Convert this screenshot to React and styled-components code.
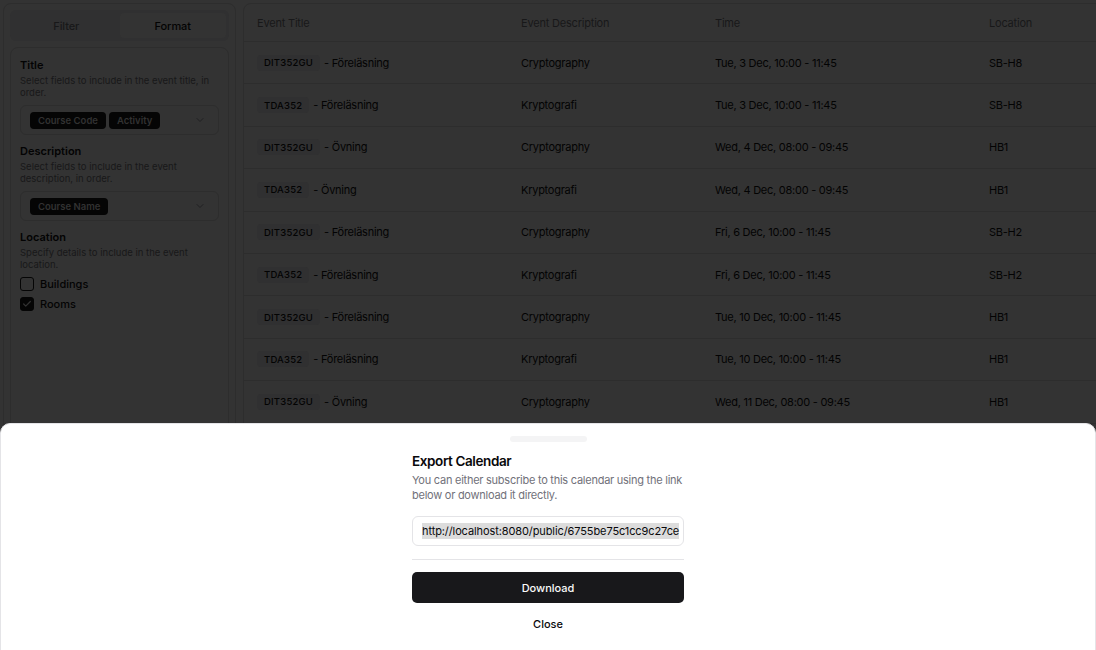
import React from "react";
import styled, { createGlobalStyle } from "styled-components";

/* Page colours as seen through the drawer's 80% black backdrop */
const dim = {
  bg: "#333333",
  border: "#2d2d2d",
  fg: "#030303",
  muted: "#181819",
  mutedBg: "#303031",
  chip: "#050505",
  chipText: "#323232",
  icon: "#202022",
};

const Global = createGlobalStyle`
  html, body { margin: 0; padding: 0; background: ${dim.bg}; }
  body { font-family: Inter, "Noto Sans", sans-serif; color: ${dim.fg}; }
  * { box-sizing: border-box; }
`;

const Screen = styled.div`
  position: relative;
  width: 1096px;
  height: 650px;
  overflow: hidden;
  background: ${dim.bg};
`;

const Page = styled.div`
  display: flex;
  gap: 7px;
  padding: 3px;
  width: 1200px;
  height: 650px;
`;

const Sidebar = styled.aside`
  width: 233px;
  flex: none;
  border: 1px solid ${dim.border};
  border-radius: 8px;
  padding: 6px;
  display: flex;
  flex-direction: column;
  gap: 6px;
`;

const TabList = styled.div`
  display: grid;
  grid-template-columns: 1fr 1fr;
  background: ${dim.mutedBg};
  border-radius: 6px;
  padding: 3px;
  height: 31px;
`;

const Tab = styled.div`
  display: flex;
  align-items: center;
  justify-content: center;
  font-size: 11px;
  letter-spacing: -0.1px;
  font-weight: 500;
  border-radius: 4px;
  color: ${(p) => (p.$active ? dim.fg : dim.muted)};
  background: ${(p) => (p.$active ? dim.bg : "transparent")};
`;

const Panel = styled.div`
  border: 1px solid ${dim.border};
  border-radius: 8px;
  padding: 10px 9px;
  flex: 1;
  display: flex;
  flex-direction: column;
  gap: 9px;
`;

const Section = styled.div`
  display: flex;
  flex-direction: column;
`;

const Label = styled.div`
  font-size: 11px;
  font-weight: 600;
  line-height: 14px;
`;

const Hint = styled.div`
  font-size: 9.5px;
  line-height: 11.5px;
  color: ${dim.muted};
  margin-top: 3px;
`;

const Select = styled.div`
  margin-top: 7px;
  height: 30px;
  border: 1px solid ${dim.border};
  border-radius: 6px;
  display: flex;
  align-items: center;
  padding: 0 9px;
  gap: 3px;
`;

const Chip = styled.span`
  background: ${dim.chip};
  color: ${dim.chipText};
  font-size: 9.5px;
  font-weight: 600;
  border-radius: 4px;
  padding: 0 8px;
  height: 17px;
  display: inline-flex;
  align-items: center;
`;

const Chevron = styled.svg`
  margin-left: auto;
  margin-right: 3px;
  width: 12px;
  height: 12px;
  color: ${dim.icon};
`;

const CheckRow = styled.label`
  display: flex;
  align-items: center;
  gap: 6px;
  font-size: 11px;
  font-weight: 500;
  height: 20px;
  margin-top: ${(p) => (p.$first ? "4px" : "0")};
`;

const Box = styled.span`
  width: 14px;
  height: 14px;
  border-radius: 3px;
  border: 1px solid ${dim.chip};
  background: ${(p) => (p.$checked ? dim.chip : dim.bg)};
  display: inline-flex;
  align-items: center;
  justify-content: center;
  color: ${dim.chipText};
`;

const TableCard = styled.div`
  flex: none;
  width: 880px;
  border: 1px solid ${dim.border};
  border-radius: 8px;
  overflow: hidden;
  align-self: flex-start;
`;

const Grid = styled.div`
  display: grid;
  grid-template-columns: 264px 194px 274px 1fr;
`;

const HeadCell = styled.div`
  height: 38px;
  padding-left: 13px;
  display: flex;
  align-items: center;
  font-size: 11px;
  letter-spacing: -0.2px;
  color: ${dim.muted};
  border-bottom: 1px solid ${dim.border};
`;

const Cell = styled.div`
  height: 42.4px;
  padding-left: 13px;
  display: flex;
  align-items: center;
  font-size: 11px;
  letter-spacing: -0.25px;
  border-bottom: 1px solid ${dim.border};
  gap: 4px;
`;

const Code = styled.span`
  background: ${dim.mutedBg};
  border-radius: 4px;
  font-size: 9.5px;
  font-weight: 500;
  letter-spacing: 0.2px;
  height: 16px;
  padding: 0 7px;
  display: inline-flex;
  align-items: center;
`;

const Drawer = styled.div`
  position: absolute;
  left: 0;
  right: 0;
  top: 423px;
  height: 240px;
  background: #ffffff;
  color: #09090b;
  border: 1px solid #e4e4e7;
  border-radius: 10px 10px 0 0;
  display: flex;
  flex-direction: column;
  align-items: center;
`;

const Handle = styled.div`
  margin-top: 12px;
  width: 77px;
  height: 6px;
  border-radius: 999px;
  background: #f4f4f5;
`;

const DrawerBody = styled.div`
  width: 272px;
  display: flex;
  flex-direction: column;
  margin-top: 9px;
`;

const DTitle = styled.div`
  font-size: 13.5px;
  font-weight: 600;
  line-height: 20px;
  letter-spacing: -0.4px;
`;

const DDesc = styled.div`
  font-size: 11px;
  line-height: 15px;
  letter-spacing: -0.25px;
  color: #71717a;
  margin-top: 2px;
`;

const LinkField = styled.div`
  margin-top: 13px;
  height: 30px;
  border: 1px solid #e4e4e7;
  border-radius: 6px;
  display: flex;
  align-items: center;
  padding: 0 9px;
  overflow: hidden;
  white-space: nowrap;
  font-size: 11px;
  letter-spacing: -0.1px;
`;

const Selected = styled.span`
  background: #dcdcdc;
  line-height: 16px;
`;

const Sep = styled.div`
  margin-top: 13px;
  height: 1px;
  background: #e4e4e7;
`;

const Primary = styled.div`
  margin-top: 12px;
  height: 31px;
  border-radius: 5px;
  background: #18181b;
  color: #fafafa;
  display: flex;
  align-items: center;
  justify-content: center;
  font-size: 11px;
  font-weight: 500;
`;

const Ghost = styled.div`
  margin-top: 5px;
  height: 31px;
  display: flex;
  align-items: center;
  justify-content: center;
  font-size: 11px;
  font-weight: 500;
`;

const rows = [
  ["DIT352GU", "Föreläsning", "Cryptography", "Tue, 3 Dec, 10:00 - 11:45", "SB-H8"],
  ["TDA352", "Föreläsning", "Kryptografi", "Tue, 3 Dec, 10:00 - 11:45", "SB-H8"],
  ["DIT352GU", "Övning", "Cryptography", "Wed, 4 Dec, 08:00 - 09:45", "HB1"],
  ["TDA352", "Övning", "Kryptografi", "Wed, 4 Dec, 08:00 - 09:45", "HB1"],
  ["DIT352GU", "Föreläsning", "Cryptography", "Fri, 6 Dec, 10:00 - 11:45", "SB-H2"],
  ["TDA352", "Föreläsning", "Kryptografi", "Fri, 6 Dec, 10:00 - 11:45", "SB-H2"],
  ["DIT352GU", "Föreläsning", "Cryptography", "Tue, 10 Dec, 10:00 - 11:45", "HB1"],
  ["TDA352", "Föreläsning", "Kryptografi", "Tue, 10 Dec, 10:00 - 11:45", "HB1"],
  ["DIT352GU", "Övning", "Cryptography", "Wed, 11 Dec, 08:00 - 09:45", "HB1"],
  ["TDA352", "Övning", "Kryptografi", "Wed, 11 Dec, 08:00 - 09:45", "HB1"],
];

const ChevronIcon = () => (
  <Chevron viewBox="0 0 24 24" fill="none" stroke="currentColor" strokeWidth="2" strokeLinecap="round" strokeLinejoin="round">
    <path d="m6 9 6 6 6-6" />
  </Chevron>
);

export default function App() {
  return (
    <Screen>
      <Global />
      <Page>
        <Sidebar>
          <TabList>
            <Tab>Filter</Tab>
            <Tab $active>Format</Tab>
          </TabList>
          <Panel>
            <Section>
              <Label>Title</Label>
              <Hint>Select fields to include in the event title, in order.</Hint>
              <Select>
                <Chip>Course Code</Chip>
                <Chip>Activity</Chip>
                <ChevronIcon />
              </Select>
            </Section>
            <Section>
              <Label>Description</Label>
              <Hint>Select fields to include in the event description, in order.</Hint>
              <Select>
                <Chip>Course Name</Chip>
                <ChevronIcon />
              </Select>
            </Section>
            <Section>
              <Label>Location</Label>
              <Hint>Specify details to include in the event location.</Hint>
              <CheckRow $first>
                <Box />
                Buildings
              </CheckRow>
              <CheckRow>
                <Box $checked>
                  <svg width="10" height="10" viewBox="0 0 24 24" fill="none" stroke="currentColor" strokeWidth="3" strokeLinecap="round" strokeLinejoin="round">
                    <path d="M20 6 9 17l-5-5" />
                  </svg>
                </Box>
                Rooms
              </CheckRow>
            </Section>
          </Panel>
        </Sidebar>
        <TableCard>
          <Grid>
            <HeadCell>Event Title</HeadCell>
            <HeadCell>Event Description</HeadCell>
            <HeadCell>Time</HeadCell>
            <HeadCell>Location</HeadCell>
            {rows.map((r, i) => (
              <React.Fragment key={i}>
                <Cell>
                  <Code>{r[0]}</Code> - {r[1]}
                </Cell>
                <Cell>{r[2]}</Cell>
                <Cell>{r[3]}</Cell>
                <Cell>{r[4]}</Cell>
              </React.Fragment>
            ))}
          </Grid>
        </TableCard>
      </Page>
      <Drawer>
        <Handle />
        <DrawerBody>
          <DTitle>Export Calendar</DTitle>
          <DDesc>You can either subscribe to this calendar using the link below or download it directly.</DDesc>
          <LinkField>
            <Selected>http://localhost:8080/public/6755be75c1cc9c27ce</Selected>
          </LinkField>
          <Sep />
          <Primary>Download</Primary>
          <Ghost>Close</Ghost>
        </DrawerBody>
      </Drawer>
    </Screen>
  );
}
